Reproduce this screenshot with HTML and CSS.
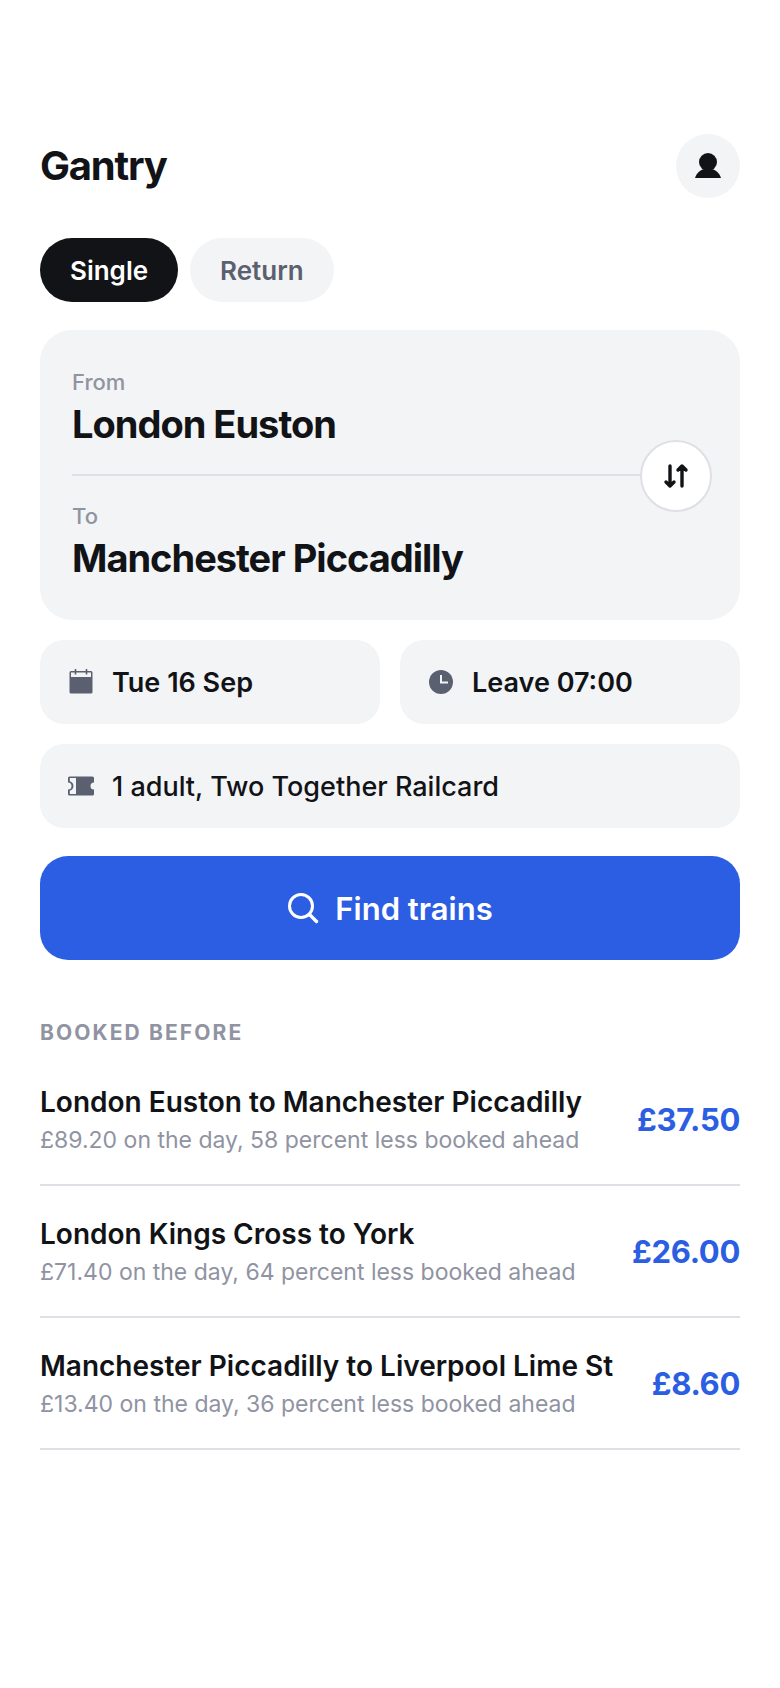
FILE: index.html
```html
<!DOCTYPE html>
<html lang="en-GB">
<head>
<meta charset="utf-8">
<meta name="viewport" content="width=device-width, initial-scale=1">
<title>Gantry</title>
<link rel="stylesheet" href="styles.css">
</head>
<body>
<main class="screen">
  <header class="topbar">
    <h1 class="brand">Gantry</h1>
    <button class="profile" type="button" aria-label="Account">
      <svg class="profile-icon" viewBox="0 0 28 28" aria-hidden="true">
        <circle cx="14" cy="10" r="9" fill="currentColor"/>
        <path d="M1 26C2.500 21 6.500 18 9.500 17.300h9C21.500 18 25.500 21 27 26z" fill="currentColor"/>
      </svg>
    </button>
  </header>

  <form class="search">
    <div class="trip-type" role="group" aria-label="Ticket type">
      <button class="pill pill-active" type="button" aria-pressed="true">Single</button>
      <button class="pill" type="button" aria-pressed="false">Return</button>
    </div>

    <div class="route">
      <div class="station">
        <label class="station-label" for="from">From</label>
        <input class="station-input" id="from" type="text" value="London Euston">
      </div>
      <div class="station">
        <label class="station-label" for="to">To</label>
        <input class="station-input" id="to" type="text" value="Manchester Piccadilly">
      </div>
      <button class="swap" type="button" aria-label="Swap stations">
        <svg class="swap-icon" viewBox="0 0 28 28" aria-hidden="true">
          <path d="M8 4v20M4 20l4 4 4-4M20 24V4M16 8l4-4 4 4" fill="none" stroke="currentColor" stroke-width="3.400" stroke-linecap="round" stroke-linejoin="round"/>
        </svg>
      </button>
    </div>

    <div class="options">
      <button class="option" type="button">
        <svg class="option-icon" viewBox="0 0 26 26" aria-hidden="true">
          <path d="M3 2h20a1.500 1.500 0 0 1 1.500 1.500v19.500A1.500 1.500 0 0 1 23 24.500H3A1.500 1.500 0 0 1 1.500 23V3.500A1.500 1.500 0 0 1 3 2zM3 3.500V8h20V3.500z" fill="currentColor" fill-rule="evenodd"/>
          <path d="M7.500 0v5.500M18.500 0v5.500" stroke="currentColor" stroke-width="1.600"/>
        </svg>
        <span>Tue 16 Sep</span>
      </button>
      <button class="option" type="button">
        <svg class="option-icon" viewBox="0 0 26 26" aria-hidden="true">
          <circle cx="13" cy="13" r="12" fill="currentColor"/>
          <path d="M13 6v7.500h7" fill="none" stroke="#f3f4f6" stroke-width="2"/>
        </svg>
        <span>Leave 07:00</span>
      </button>
      <button class="option option-wide" type="button">
        <svg class="option-icon" viewBox="0 0 26 26" aria-hidden="true">
          <path d="M1.500 3.500h23q1.500 0 1.500 1.500v4.500a3.500 3.500 0 0 0 0 7V21q0 1.500-1.500 1.500h-23Q0 22.500 0 21v-4.500a3.500 3.500 0 0 0 0-7V5q0-1.500 1.500-1.500zM1.800 5v3.200a5 5 0 0 1 0 9.600V21H8V5z" fill="currentColor" fill-rule="evenodd"/>
        </svg>
        <span>1 adult, Two Together Railcard</span>
      </button>
    </div>

    <button class="submit" type="submit">
      <svg class="submit-icon" viewBox="0 0 32 32" aria-hidden="true">
        <circle cx="14" cy="14" r="11.500" fill="none" stroke="currentColor" stroke-width="3"/>
        <path d="M22.500 22.500l7 7" stroke="currentColor" stroke-width="3.400" stroke-linecap="round"/>
      </svg>
      <span>Find trains</span>
    </button>
  </form>

  <section class="history" aria-labelledby="history-title">
    <h2 class="history-title" id="history-title">Booked before</h2>
    <ul class="trips">
      <li>
        <a class="trip" href="#euston-manchester">
          <span class="trip-text">
            <span class="trip-name">London Euston to Manchester Piccadilly</span>
            <span class="trip-note">£89.20 on the day, 58 percent less booked ahead</span>
          </span>
          <span class="trip-price">£37.50</span>
        </a>
      </li>
      <li>
        <a class="trip" href="#kings-cross-york">
          <span class="trip-text">
            <span class="trip-name">London Kings Cross to York</span>
            <span class="trip-note">£71.40 on the day, 64 percent less booked ahead</span>
          </span>
          <span class="trip-price">£26.00</span>
        </a>
      </li>
      <li>
        <a class="trip" href="#manchester-liverpool">
          <span class="trip-text">
            <span class="trip-name">Manchester Piccadilly to Liverpool Lime St</span>
            <span class="trip-note">£13.40 on the day, 36 percent less booked ahead</span>
          </span>
          <span class="trip-price">£8.60</span>
        </a>
      </li>
    </ul>
  </section>
</main>
</body>
</html>
```

FILE: styles.css
```css
:root {
  --ink: #111316;
  --slate: #5b6070;
  --muted: #9093a2;
  --surface: #f3f4f6;
  --line: #dfe0e6;
  --accent: #2b5ee2;
}

* {
  box-sizing: border-box;
}

body {
  margin: 0;
  background: #fff;
  color: var(--ink);
  font-family: Inter, "Liberation Sans", sans-serif;
}

button,
input {
  margin: 0;
  border: 0;
  padding: 0;
  font: inherit;
  color: inherit;
}

button {
  cursor: pointer;
}

.screen {
  padding: 134px 40px 40px;
}

.topbar {
  display: flex;
  align-items: center;
  justify-content: space-between;
  margin-bottom: 40px;
}

.brand {
  margin: 0;
  font-size: 40px;
  line-height: 48px;
  font-weight: 700;
  letter-spacing: -0.03em;
}

.profile {
  display: grid;
  place-items: center;
  width: 64px;
  height: 64px;
  border-radius: 50%;
  background: var(--surface);
}

.profile-icon {
  width: 28px;
  height: 28px;
}

.trip-type {
  display: flex;
  gap: 12px;
  margin-bottom: 28px;
}

.pill {
  height: 64px;
  padding: 0 30px;
  border-radius: 32px;
  background: var(--surface);
  color: var(--slate);
  font-size: 26px;
  font-weight: 600;
}

.pill-active {
  background: var(--ink);
  color: #fff;
}

.route {
  position: relative;
  margin-bottom: 20px;
  padding: 12px 32px;
  border-radius: 32px;
  background: var(--surface);
}

.station {
  display: flex;
  flex-direction: column;
  gap: 6px;
  padding: 28px 0 26px;
}

.station + .station {
  border-top: 2px solid var(--line);
}

.station-label {
  color: var(--muted);
  font-size: 22px;
  line-height: 24px;
  font-weight: 500;
}

.station-input {
  width: 100%;
  height: 48px;
  background: transparent;
  font-size: 38px;
  line-height: 48px;
  font-weight: 700;
  letter-spacing: -1px;
}

.swap {
  position: absolute;
  top: calc(50% - 35px);
  right: 28px;
  display: grid;
  place-items: center;
  width: 72px;
  height: 72px;
  border: 2px solid var(--line);
  border-radius: 50%;
  background: #fff;
}

.swap-icon {
  width: 28px;
  height: 28px;
}

.options {
  display: grid;
  grid-template-columns: 1fr 1fr;
  gap: 20px;
  margin-bottom: 28px;
}

.option {
  display: flex;
  align-items: center;
  gap: 18px;
  height: 84px;
  padding: 0 28px;
  border-radius: 24px;
  background: var(--surface);
  font-size: 27px;
  font-weight: 600;
}

.option-wide {
  grid-column: 1 / -1;
  font-weight: 500;
}

.option-icon {
  width: 26px;
  height: 26px;
  color: var(--slate);
}

.submit {
  display: flex;
  align-items: center;
  justify-content: center;
  gap: 16px;
  width: 100%;
  height: 104px;
  border-radius: 28px;
  background: var(--accent);
  color: #fff;
  font-size: 31px;
  font-weight: 600;
}

.submit-icon {
  width: 32px;
  height: 32px;
}

.history-title {
  margin: 60px 0 8px;
  color: var(--muted);
  font-size: 21px;
  line-height: 26px;
  font-weight: 700;
  letter-spacing: 0.1em;
  text-transform: uppercase;
}

.trips {
  margin: 0;
  padding: 0;
  list-style: none;
}

.trip {
  display: flex;
  align-items: center;
  justify-content: space-between;
  gap: 24px;
  padding: 30px 0;
  border-bottom: 2px solid var(--line);
  color: inherit;
  text-decoration: none;
}

.trip-text {
  display: flex;
  flex-direction: column;
  gap: 6px;
}

.trip-name {
  font-size: 28px;
  line-height: 36px;
  font-weight: 600;
}

.trip-note {
  color: var(--muted);
  font-size: 23px;
  line-height: 28px;
}

.trip-price {
  color: var(--accent);
  font-size: 31px;
  font-weight: 700;
  letter-spacing: -0.01em;
}
```
